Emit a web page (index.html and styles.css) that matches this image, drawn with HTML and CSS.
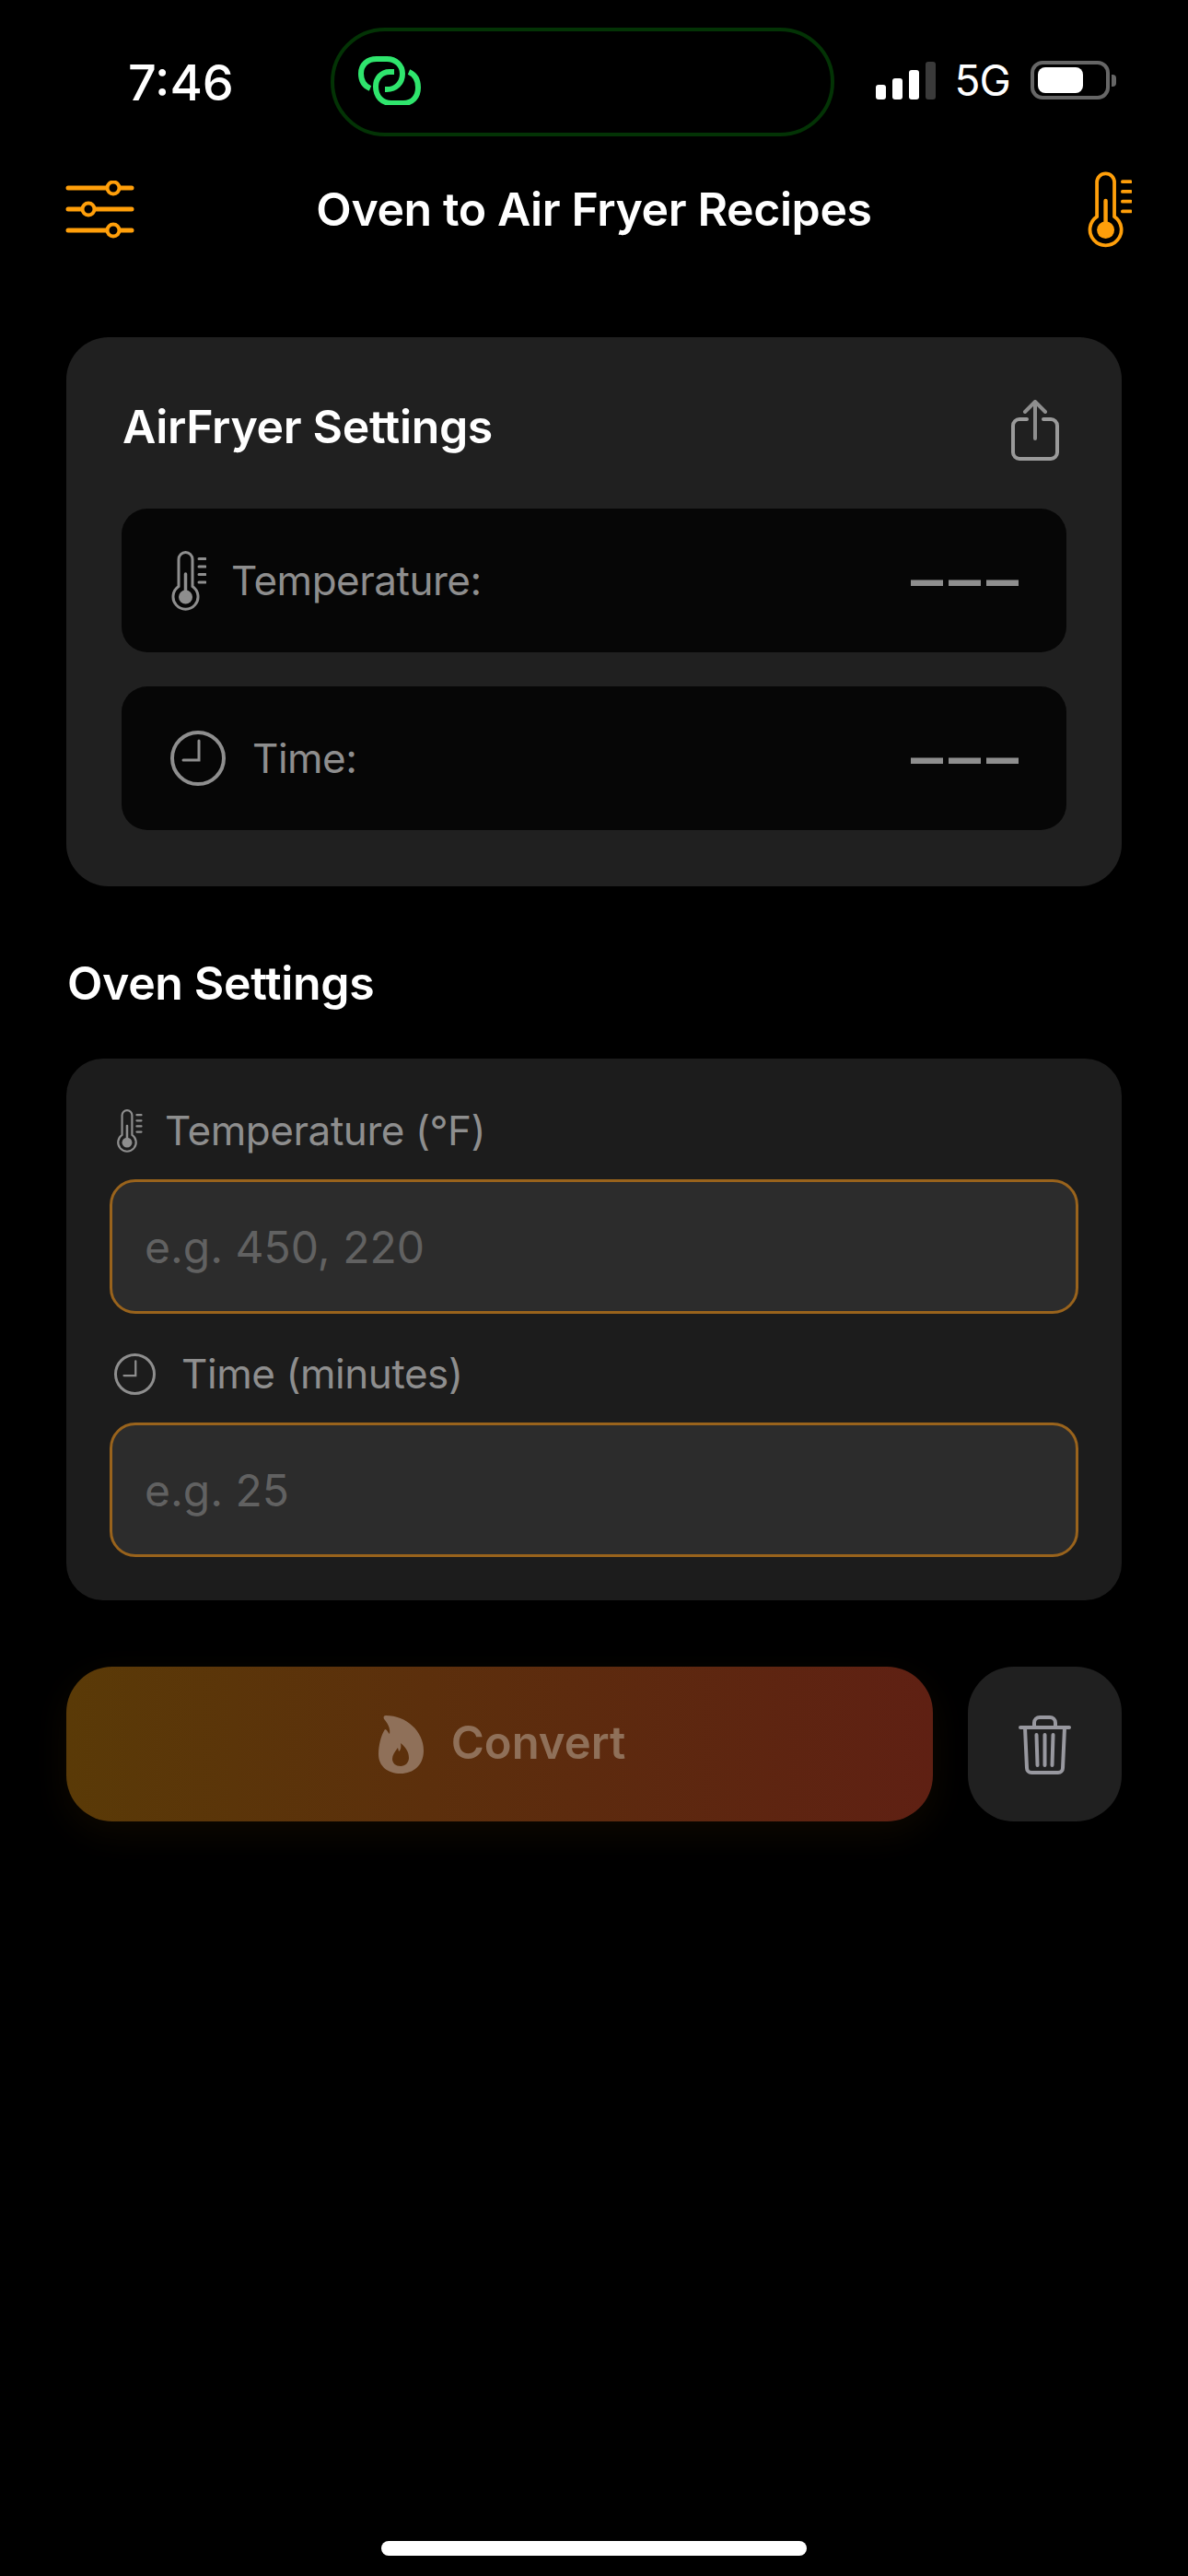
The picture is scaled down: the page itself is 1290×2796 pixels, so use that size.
FILE: index.html
```html
<!DOCTYPE html>
<html lang="en">
<head>
    <meta charset="UTF-8">
    <meta name="viewport" content="width=device-width, initial-scale=1.0">
    <title>Oven to Air Fryer Recipes</title>
    <link rel="stylesheet" href="styles.css">
</head>
<body>
    <svg class="defs" width="0" height="0">
        <symbol id="thermo" viewBox="0 0 38 65">
            <path d="M8 38.5V9a7.5 7.5 0 0 1 15 0v29.5a13.5 13.5 0 1 1-15 0z" fill="none" stroke="currentColor" stroke-width="3"/>
            <circle cx="15.5" cy="50" r="7.5" fill="currentColor"/>
            <path d="M15.5 25V48" stroke="currentColor" stroke-width="3.5" stroke-linecap="round"/>
            <path d="M30 8.5h7M30 17h7M30 25.500h7M30 34h7" stroke="currentColor" stroke-width="3" stroke-linecap="round"/>
        </symbol>
        <symbol id="clock" viewBox="0 0 60 60">
            <circle cx="30" cy="30" r="28" fill="none" stroke="currentColor" stroke-width="4"/>
            <path d="M31 11V32H14" fill="none" stroke="currentColor" stroke-width="3" stroke-linecap="round"/>
        </symbol>
    </svg>

    <div class="status-bar">
        <span class="clock-time">7:46</span>
        <div class="island">
            <svg class="island-logo" viewBox="0 0 68 53" width="68" height="53">
                <path d="M13 35C6 32 3 26 3 19 3 9 10 3 20 3h11c10 0 17 7 17 16 0 10-7 17-17 17h-2" fill="none" stroke="#2fe56d" stroke-width="6" stroke-linecap="butt"/>
                <path d="M39 17h-5c-9 0-15 7-15 16 0 11 7 18 17 18h13c10 0 16-7 16-17 0-8-3-14-10-17" fill="none" stroke="#2fe56d" stroke-width="6"/>
            </svg>
        </div>
        <div class="signal">
            <span class="bar bar-1"></span>
            <span class="bar bar-2"></span>
            <span class="bar bar-3"></span>
            <span class="bar bar-4"></span>
        </div>
        <span class="network">5G</span>
        <div class="battery"><span class="battery-level"></span></div>
        <span class="battery-nub"></span>
    </div>

    <div class="nav">
        <svg class="nav-sliders" viewBox="0 0 75 63" width="75" height="63">
            <path d="M3 8H72M3 31H72M3 54H72" stroke="#ff9f0a" stroke-width="5" stroke-linecap="round"/>
            <circle cx="52" cy="8" r="6.5" fill="#000" stroke="#ff9f0a" stroke-width="4"/>
            <circle cx="25" cy="31" r="6.5" fill="#000" stroke="#ff9f0a" stroke-width="4"/>
            <circle cx="52" cy="54" r="6.5" fill="#000" stroke="#ff9f0a" stroke-width="4"/>
        </svg>
        <h1>Oven to Air Fryer Recipes</h1>
        <svg class="nav-thermo"><use href="#thermo"/></svg>
    </div>

    <div class="main">
        <div class="card result-card">
            <div class="card-header">
                <h2>AirFryer Settings</h2>
                <svg class="share-icon" viewBox="0 0 52 66" width="52" height="66">
                    <path d="M17 21H9a7 7 0 0 0-7 7v29a7 7 0 0 0 7 7h34a7 7 0 0 0 7-7V28a7 7 0 0 0-7-7h-8" fill="none" stroke="#9a9a9a" stroke-width="4" stroke-linecap="round"/>
                    <path d="M26 42V3M15 13L26 2l11 11" fill="none" stroke="#8e8e8e" stroke-width="4" stroke-linecap="round" stroke-linejoin="round"/>
                </svg>
            </div>
            <div class="result-row">
                <svg class="row-thermo"><use href="#thermo"/></svg>
                <span class="row-label">Temperature:</span>
                <span class="row-value">–––</span>
            </div>
            <div class="result-row">
                <svg class="row-clock"><use href="#clock"/></svg>
                <span class="row-label">Time:</span>
                <span class="row-value">–––</span>
            </div>
        </div>

        <h2 class="section-title">Oven Settings</h2>

        <div class="card form-card">
            <label class="field-label" for="temp">
                <svg class="label-thermo"><use href="#thermo"/></svg>
                Temperature (°F)
            </label>
            <input type="text" id="temp" placeholder="e.g. 450, 220">

            <label class="field-label time-label" for="time">
                <svg class="label-clock"><use href="#clock"/></svg>
                Time (minutes)
            </label>
            <input type="text" id="time" placeholder="e.g. 25">
        </div>

        <div class="actions">
            <button class="convert-btn">
                <svg viewBox="0 0 49 63" width="49" height="63">
                    <path fill-rule="evenodd" fill="currentColor" d="M8 0C5 0 5 3 7 5c4 5 6 10 5 15C10 18 9 15 7 15 3 21 0 32 0 42c0 13 10 21 24 21s25-9 25-25C49 17 30 0 8 0Z M24 30c1 4 0 8-2 9l-1-4c-3 4-6 8-6 12 0 5 4 8 9 8s9-4 9-9c0-7-4-12-9-16Z"/>
                </svg>
                <span class="convert-text">Convert</span>
            </button>
            <button class="trash-btn">
                <svg viewBox="0 0 57 65" width="57" height="65">
                    <path d="M2 14H55M17 14V9a6 6 0 0 1 6-6h11a6 6 0 0 1 6 6v5M7 14l2 44a5 5 0 0 0 5 5h29a5 5 0 0 0 5-5l2-44" fill="none" stroke="#98989f" stroke-width="4" stroke-linecap="round"/>
                    <path d="M19.500 22l1 33M28.500 22v33M37.500 22l-1 33" fill="none" stroke="#98989f" stroke-width="4" stroke-linecap="round"/>
                </svg>
            </button>
        </div>
    </div>

    <div class="home-indicator"></div>
</body>
</html>
```
FILE: styles.css
```css
body {
    font-family: Inter, "Noto Sans", sans-serif;
    background-color: #000;
    color: #fff;
    margin: 0;
    padding: 0;
    width: 1290px;
    height: 2796px;
    overflow: hidden;
}

.defs {
    position: absolute;
}

.status-bar {
    display: flex;
    align-items: center;
    height: 118px;
    padding: 30px 0 0 139px;
}

.clock-time {
    width: 220px;
    font-size: 54px;
    font-weight: 500;
}

.island {
    display: flex;
    align-items: center;
    box-sizing: border-box;
    width: 547px;
    height: 118px;
    padding-left: 26px;
    border: 4px solid #033305;
    border-radius: 59px;
}

.island-logo {
    margin-top: -4px;
}

.signal {
    display: flex;
    align-items: flex-end;
    gap: 7.500px;
    height: 41px;
    margin-left: 45px;
    margin-top: -4px;
}

.bar {
    width: 10.500px;
    background-color: #fff;
    border-radius: 3px;
}

.bar-1 { height: 16px; }
.bar-2 { height: 23px; }
.bar-3 { height: 32px; }
.bar-4 { height: 41px; background-color: #3a3a3a; }

.network {
    margin-left: 21px;
    margin-top: -4px;
    font-size: 46px;
    font-weight: 400;
    letter-spacing: -1px;
}

.battery {
    box-sizing: border-box;
    width: 86px;
    height: 42px;
    margin-left: 22px;
    margin-top: -4px;
    padding: 3px 0 0 4px;
    border: 4px solid #666;
    border-radius: 13px;
}

.battery-level {
    display: block;
    width: 49px;
    height: 28px;
    background-color: #fff;
    border-radius: 8px;
}

.battery-nub {
    width: 5px;
    height: 13px;
    margin-left: 2px;
    margin-top: -4px;
    background-color: #666;
    border-radius: 0 4px 4px 0;
}

.nav {
    display: grid;
    grid-template-columns: 1fr auto 1fr;
    align-items: center;
    height: 85px;
    margin-top: 37px;
    padding: 0 61px;
}

.nav h1 {
    margin: -2px 0 0;
    font-size: 50px;
    font-weight: 600;
    letter-spacing: -0.4px;
}

.nav-sliders {
    margin-left: 10px;
}

.nav-thermo {
    justify-self: end;
    width: 48px;
    height: 85px;
    color: #ff9f0a;
}

.main {
    margin-top: 96px;
    padding: 0 72px;
}

.card {
    box-sizing: border-box;
}

.result-card {
    height: 596px;
    padding: 60px;
    background-color: #202020;
    border-radius: 46px;
}

.card-header {
    display: flex;
    justify-content: space-between;
    height: 74px;
    margin-bottom: 52px;
    padding-left: 1px;
}

h2 {
    margin: 0;
    font-size: 50px;
    line-height: 74px;
    font-weight: 600;
    letter-spacing: -0.35px;
}

.share-icon {
    margin: 8px 8px 0 0;
}

.result-row {
    display: flex;
    align-items: center;
    height: 156px;
    padding: 0 52px;
    background-color: #060606;
    border-radius: 28px;
    color: #8e8e8e;
}

.result-row + .result-row {
    margin-top: 37px;
}

.row-thermo {
    width: 38px;
    height: 65px;
    margin: 0 27px 0 2px;
}

.row-clock {
    width: 60px;
    height: 60px;
    margin: 0 29px 0 1px;
}

.row-label {
    font-size: 44px;
    letter-spacing: -0.5px;
}

.row-value {
    margin: -3px -6px 0 auto;
    font-size: 70px;
    font-weight: 500;
    line-height: 1;
    letter-spacing: 6px;
}

.section-title {
    margin: 68px 0 45px 1px;
}

.form-card {
    height: 588px;
    padding: 48px 47px;
    background-color: #1c1c1c;
    border-radius: 40px;
}

.field-label {
    display: flex;
    align-items: center;
    height: 60px;
    margin-bottom: 23px;
    padding-left: 7px;
    font-size: 44px;
    letter-spacing: -0.45px;
    color: #8e8e8e;
}

.time-label {
    margin-top: 35px;
    margin-bottom: 23px;
    padding-left: 5px;
}

.label-thermo {
    width: 29px;
    height: 47px;
    margin-right: 24px;
}

.label-clock {
    width: 45px;
    height: 45px;
    margin-right: 28px;
}

input {
    display: block;
    box-sizing: border-box;
    width: 100%;
    height: 146px;
    padding: 0 35px;
    font-family: inherit;
    font-size: 48px;
    color: #fff;
    background-color: #2c2c2c;
    border: 3px solid #99631c;
    border-radius: 28px;
}

input::placeholder {
    color: #616161;
    opacity: 1;
}

.actions {
    display: flex;
    gap: 38px;
    margin-top: 72px;
}

button {
    display: flex;
    align-items: center;
    justify-content: center;
    height: 168px;
    padding: 0;
    border: none;
    border-radius: 50px;
    font-family: inherit;
}

.convert-btn {
    flex: 1;
    gap: 30px;
    padding-left: 5px;
    font-size: 49px;
    font-weight: 600;
    color: #8f7059;
    background: linear-gradient(90deg, #5a3a07, #5f2013);
    box-shadow: 0 12px 40px rgba(255, 159, 10, 0.06);
}

.convert-text {
    margin-top: -3px;
}

.trash-btn {
    width: 167px;
    background-color: #202020;
}

.home-indicator {
    width: 462px;
    height: 16px;
    margin: 781px auto 0;
    background-color: #fff;
    border-radius: 8px;
}
```
